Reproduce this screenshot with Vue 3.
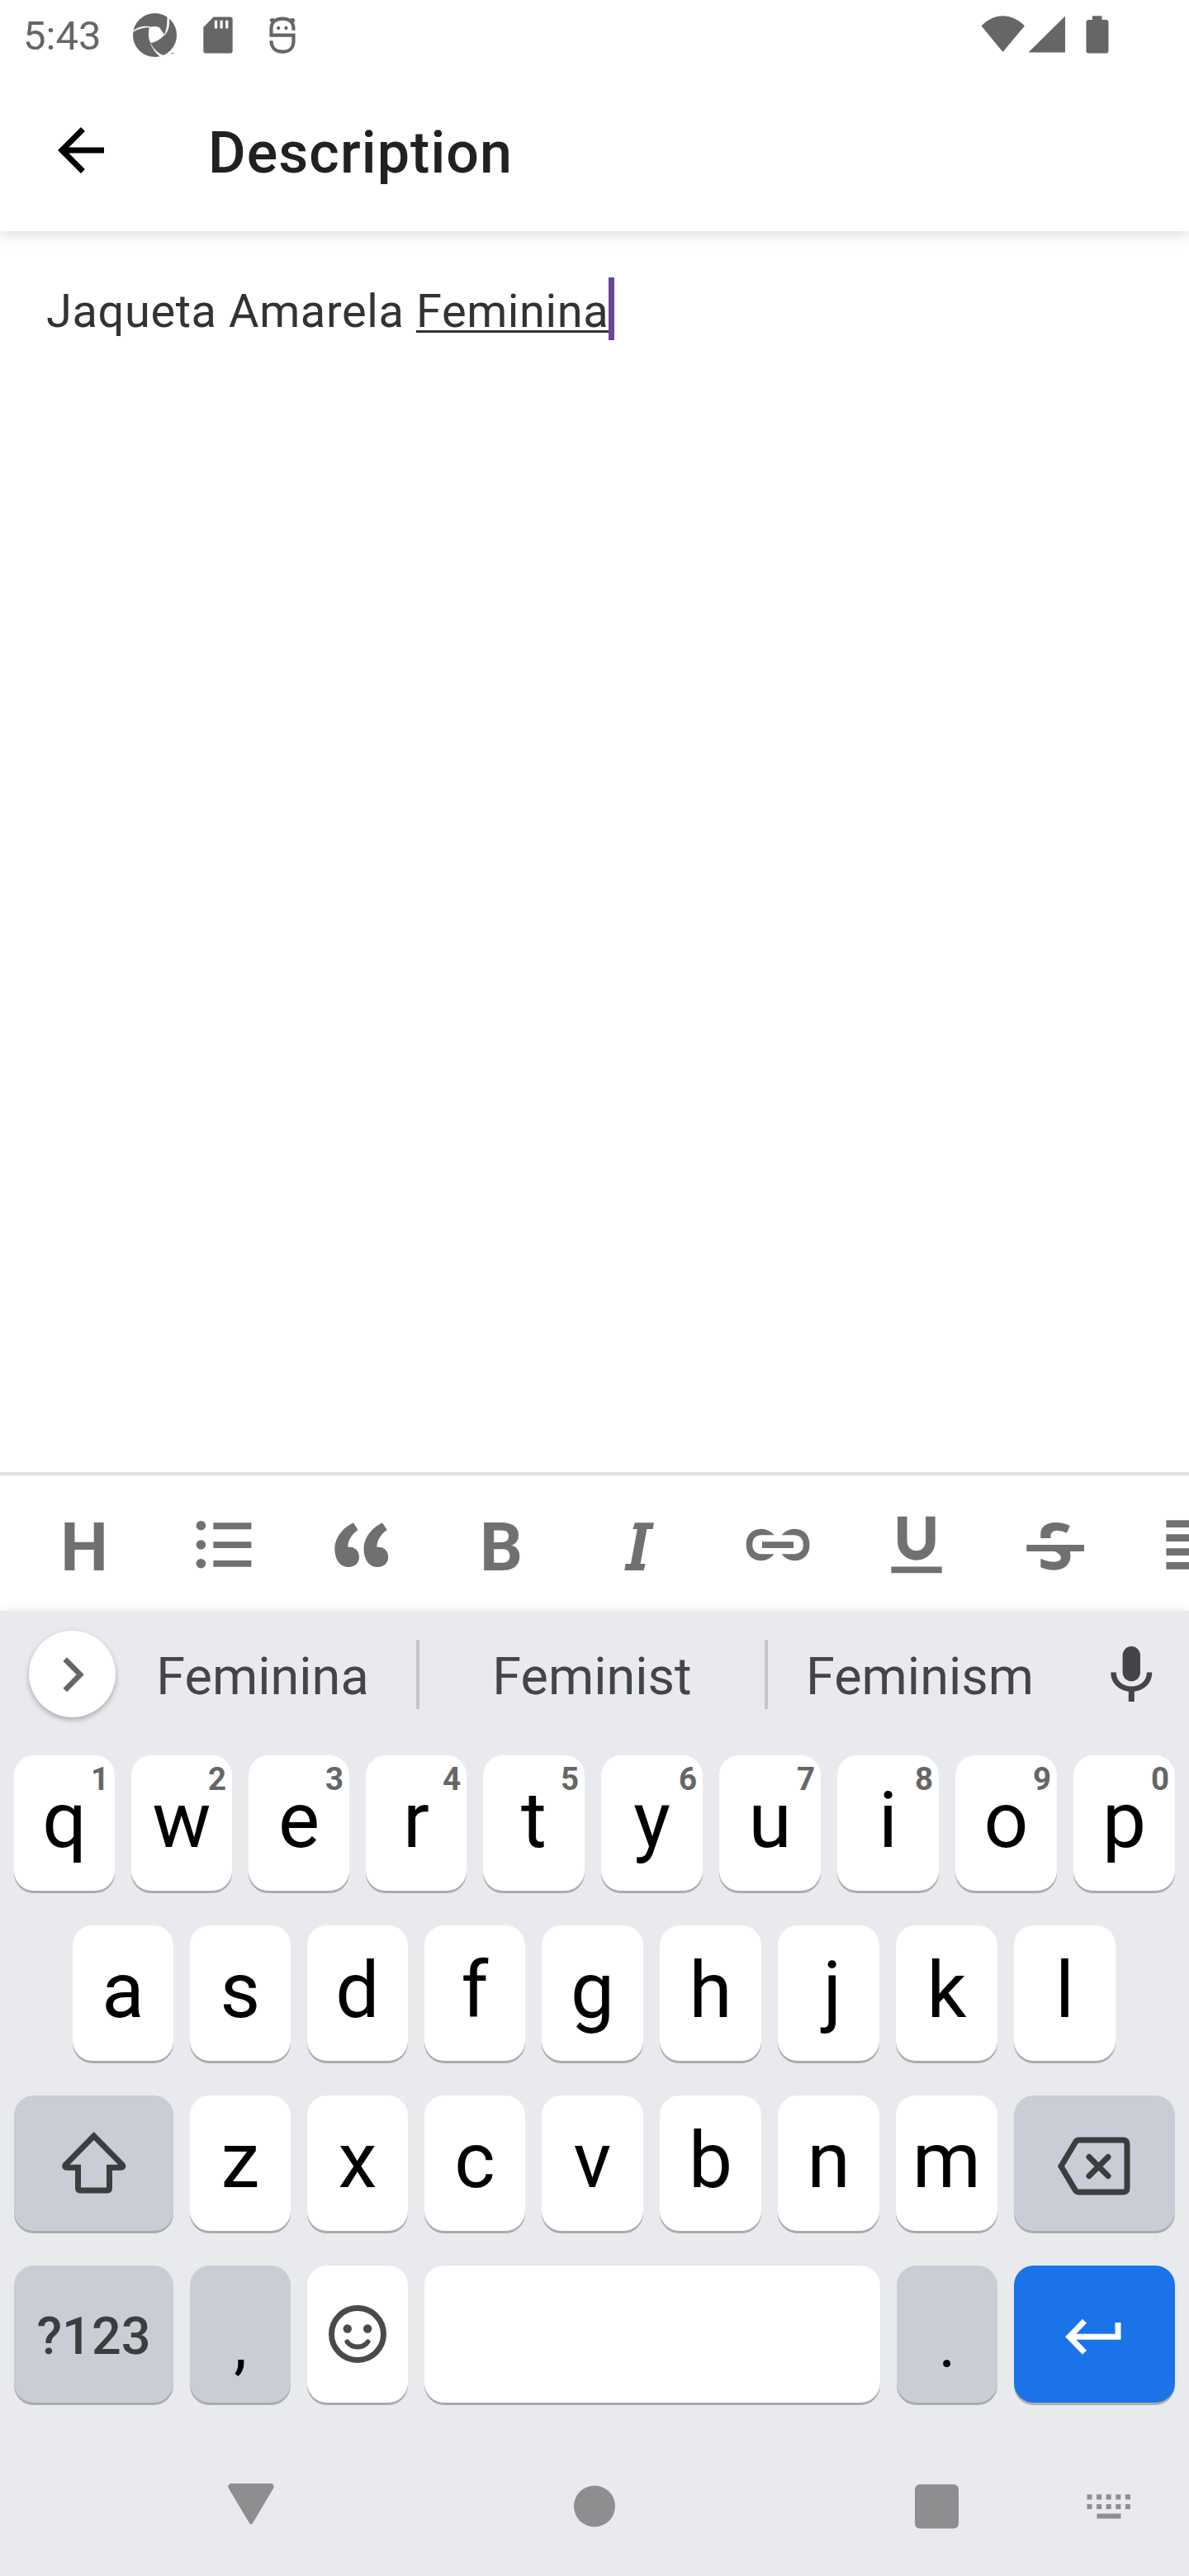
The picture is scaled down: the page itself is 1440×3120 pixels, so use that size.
<script setup>
const keyRows = [
  [..."qwertyuiop"].map((c, i) => ({ label: c, hint: String((i + 1) % 10), wide: i > 3 })),
  [..."asdfghjkl"].map((c, i) => ({ label: c, wide: i > 3 })),
]
const thirdRow = [..."zxcvbnm"].map((c, i) => ({ label: c, wide: i > 2 }))
const dotColumns = [0, 11.6, 23.2, 34.8, 46.4]
</script>

<template>
  <div class="screen">
    <header class="status">
      <span class="clock">5:43</span>
      <svg class="aperture" viewBox="33 36 159 159" width="53" height="53">
        <circle cx="112.500" cy="115.500" r="79.500" fill="#666" />
        <path d="M93 87Q116 81 129 88L148 115Q128 138 97 145Q84 118 93 87Z" fill="#fff" />
        <path d="M30 104Q62 78 96 86.500Q66 84 30 104Z" fill="#fff" stroke="#fff" stroke-width="3" />
        <path d="M159 46Q160 86 149 115Q169 90 163 50Z" fill="#fff" stroke="#fff" stroke-width="2" />
        <path d="M97 146Q110 178 134 195L144 190Q114 178 97 146Z" fill="#fff" stroke="#fff" stroke-width="1" />
        <path d="M168 181L195 172V198H140L150 189Z" fill="#fff" />
        <path d="M170 179h5v5h-3v-4zM177 179h6v5h-2v-3h-2v3h-2z" fill="#777" />
      </svg>
      <svg class="sdcard" viewBox="289 47 109 135" width="36" height="45">
        <path d="M327 48H389q8 0 8 8V173q0 8-8 8H298q-8 0-8-8V86Z" fill="#666" />
        <path d="M331 61h10v29h-10zM351 61h10v29h-10zM371 61h10v29h-10z" fill="#fff" />
      </svg>
      <svg class="mascot" viewBox="527 47 95 135" width="32" height="45">
        <g fill="none" stroke="#666" stroke-width="12.500">
          <path d="M615 97V92C615 66 598 55 575 55S534 66 534 92V115H615V136C615 162 598 175 575 175S534 162 534 135" />
          <path d="M531 56L543 68M618 56L606 68" stroke-width="10" />
          <path d="M532 66L544 54M617 66L605 54" stroke-width="7" />
        </g>
        <circle cx="560" cy="89" r="6.500" fill="#666" />
        <circle cx="588" cy="89" r="6.500" fill="#666" />
      </svg>
      <svg class="signals" viewBox="0 0 156 48" width="156" height="48">
        <g fill="#666">
          <path d="M0.500 13.300Q12 1.300 26.500 1.300T53 13.300L26.500 45Z" />
          <path d="M57.500 45.500L102 1.500V45.500Z" />
          <path d="M135 1.300h11.500v4.700h5q3 0 3 3v34.500q0 3-3 3h-21q-3 0-3-3v-34.500q0-3 3-3h4.500z" />
        </g>
      </svg>
    </header>

    <div class="appbar">
      <svg class="back" viewBox="0 0 24 24" width="84" height="84">
        <path d="M20 11H7.830l5.590-5.590L12 4l-8 8 8 8 1.410-1.410L7.830 13H20v-2z" />
      </svg>
      <h1>Description</h1>
    </div>

    <main class="editor">
      <p>Jaqueta Amarela <span class="composing">Feminina</span></p>
      <i class="caret"></i>
    </main>

    <div class="format">
      <button class="glyph">H</button>
      <button>
        <svg viewBox="0 0 84 84">
          <circle cx="15.400" cy="18.700" r="5.800" /><circle cx="15.400" cy="42" r="5.800" /><circle cx="15.400" cy="64.700" r="5.800" />
          <path d="M30.400 15.300H76.400V23.200H30.400zM30.400 38.200H76.400V46H30.400zM30.400 61H76.400V68.800H30.400z" />
        </svg>
      </button>
      <button>
        <svg viewBox="0 0 84 84">
          <path d="M32 15.500L37.500 24C29 30 25 38 25.300 45C33 44 39 49 39 57C39 64 33.500 69 26.500 69C15 69 9.400 59 9.400 47C9.400 34 19 21 32 15.500Z" />
          <path transform="translate(35.200)" d="M32 15.500L37.500 24C29 30 25 38 25.300 45C33 44 39 49 39 57C39 64 33.500 69 26.500 69C15 69 9.400 59 9.400 47C9.400 34 19 21 32 15.500Z" />
        </svg>
      </button>
      <button class="glyph bold">B</button>
      <button>
        <svg viewBox="0 0 84 84">
          <path d="M37 15.200H60L58.700 23H51.400L43.600 65H49.500L47.700 73H24.300L25.700 65H32L39.900 23H34.400Z" />
        </svg>
      </button>
      <button>
        <svg viewBox="0 0 84 84">
          <path d="M37.700 30.300H22Q11.300 31 11.300 41.800T22 53.300H37.700Q31 61.300 22 61.300C10 61.300 3.700 53 3.700 42S10 22.700 22 22.700Q31 22.700 37.700 30.300Z" />
          <path d="M46.500 30.300H62.200Q72.900 31 72.900 41.800T62.200 53.300H46.500Q53.200 61.300 62.200 61.300C74.200 61.300 80.500 53 80.500 42S74.200 22.700 62.200 22.700Q53.200 22.700 46.500 30.300Z" />
          <path d="M23 38.200H61V46H23z" />
        </svg>
      </button>
      <button>
        <svg viewBox="0 0 84 84">
          <path d="M24.800 7.700V38a17.050 17.050 0 0 0 34.100 0V7.700" fill="none" stroke="#707070" stroke-width="11.500" />
          <path d="M11.400 68.500H72.700V76.300H11.400z" />
        </svg>
      </button>
      <button>
        <svg viewBox="0 0 84 84">
          <path d="M24.300 34V28C25 19 33 15 43 15Q52 15 59.700 19L56 27.700Q49.500 24.600 43 24.800Q35 26 36.700 34Z" />
          <path d="M40.700 49.800H59.700C63 62 56 72.700 41 72.700Q31 72.700 24.300 69.300V58.700Q33 62.700 40 62.700C52 62.700 51.500 54 40.700 49.800Z" />
          <path d="M7.300 42H77V50H7.300z" />
        </svg>
      </button>
      <button>
        <svg viewBox="0 0 84 84">
          <path d="M8.400 12.300H76V21H8.400zM8.400 29.300H76V38H8.400zM8.400 46.300H76V55H8.400zM8.400 63H76V71.700H8.400z" />
        </svg>
      </button>
    </div>

    <section class="keyboard">
      <div class="suggestions">
        <span class="expand">
          <svg viewBox="-21 -21 42 42" width="42" height="42">
            <path d="M-9.300 -18.400L9.200 0.300L-9.300 19" fill="none" stroke="#666" stroke-width="6.500" />
          </svg>
        </span>
        <span class="word first">Feminina</span>
        <i class="divider"></i>
        <span class="word second">Feminist</span>
        <i class="divider"></i>
        <span class="word third">Feminism</span>
        <svg class="mic" viewBox="0 0 84 84" width="84" height="84">
          <rect x="31.600" y="8" width="21.400" height="42.300" rx="10.700" fill="#434547" />
          <path d="M20.500 39.500C20.500 51.500 30 59.700 42.300 59.700S64.100 51.500 64.100 39.500" fill="none" stroke="#434547" stroke-width="6.400" />
          <path d="M38.800 60h7v15h-7z" fill="#434547" />
        </svg>
      </div>

      <div v-for="(row, r) in keyRows" :key="r" class="row" :class="{ indent: r === 1 }">
        <div v-for="k in row" :key="k.label" class="key" :class="{ w: k.wide, hooked: k.label === 'j' }">
          {{ k.label }}<small v-if="k.hint">{{ k.hint }}</small>
        </div>
      </div>

      <div class="row">
        <div class="key mod side">
          <svg viewBox="0 0 84 84" width="84" height="84">
            <path d="M41.700 9L7.200 44Q5.500 47.200 9.500 47.200H22.500V72Q22.500 75 25.500 75H57.500q3 0 3-3V47.200H74Q78 47.200 76.200 44Z" fill="none" stroke="#3c3d3f" stroke-width="7" />
          </svg>
        </div>
        <div v-for="k in thirdRow" :key="k.label" class="key" :class="{ w: k.wide }">{{ k.label }}</div>
        <div class="key mod side right">
          <svg viewBox="0 0 96 84" width="96" height="84">
            <g fill="none" stroke="#3c3d3f" stroke-width="7">
              <path d="M7 45.700L24.500 16.500Q26 14 29 14H82Q87 14 87 19V72Q87 77 82 77H29Q26 77 24.500 75Z" />
              <path d="M41 34.500L64 57.500M64 34.500L41 57.500" stroke-linecap="round" />
            </g>
          </svg>
        </div>
      </div>

      <div class="row bottom">
        <div class="key mod side symbols">?123</div>
        <div class="key mod punct">,</div>
        <div class="key emoji">
          <svg viewBox="-42 -42 84 84" width="84" height="84">
            <circle r="31.500" fill="none" stroke="#4a4a4a" stroke-width="7" />
            <circle cx="-12.200" cy="-6.500" r="5.200" fill="#4a4a4a" />
            <circle cx="12.200" cy="-6.500" r="5.200" fill="#4a4a4a" />
            <path d="M-12.500 9.500Q-8 15.500 0 15.500T12.500 9.500" fill="none" stroke="#4a4a4a" stroke-width="6" stroke-linecap="round" />
          </svg>
        </div>
        <div class="key space"></div>
        <div class="key mod punct">.</div>
        <div class="key side right enter">
          <svg viewBox="-42 -42 84 84" width="84" height="84">
            <path d="M28 -14V3.300H-28M-12.500 -15.700L-31 3.300L-12.500 22.300" fill="none" stroke="#fff" stroke-width="7" />
          </svg>
        </div>
      </div>

      <nav class="navbar">
        <svg class="nav-back" viewBox="0 0 56 60" width="56" height="60">
          <path d="M3 2H53Q57 3.500 55 8L30 50Q28 52.500 26 50L1 8Q-1 3.500 3 2Z" />
        </svg>
        <svg class="nav-home" viewBox="0 0 50 60" width="50" height="60"><circle cx="25" cy="29.500" r="25" /></svg>
        <svg class="nav-recent" viewBox="0 0 53 60" width="53" height="60"><rect y="3" width="53" height="53.500" rx="6" /></svg>
        <svg class="nav-ime" viewBox="0 0 54 60" width="54" height="60">
          <g v-for="x in dotColumns" :key="x">
            <rect :x="x + 0.500" y="15.200" width="6" height="6.200" />
            <rect :x="x + 0.500" y="27" width="6" height="6" />
          </g>
          <rect x="12.500" y="38.500" width="29" height="6" />
        </svg>
      </nav>
    </section>
  </div>
</template>

<style>
body { margin: 0; background: #fff; }
</style>

<style scoped>
.screen {
  width: 1440px;
  height: 3120px;
  overflow: hidden;
  display: flex;
  flex-direction: column;
  background: #fff;
  font-family: Roboto, "Liberation Sans", sans-serif;
}
svg { display: block; flex: none; }
.status { height: 84px; display: flex; align-items: center; flex: none; }
.clock { width: 131px; margin-left: 28px; margin-top: 4px; font-size: 49px; line-height: 60px; color: #666; }
.aperture { margin: 1px 0 0 2px; }
.sdcard { margin-left: 32px; }
.mascot { margin-left: 44px; }
.signals { margin: 0 0 0 830px; }
.appbar {
  height: 196px;
  flex: none;
  display: flex;
  align-items: center;
  box-shadow: 0 3px 18px rgba(0, 0, 0, .16);
  clip-path: inset(0 0 -24px 0);
}
.back { margin-left: 56px; }
h1 {
  margin: 0 0 0 112px;
  padding-top: 6px;
  font-size: 70px;
  line-height: 84px;
  font-weight: 500;
  letter-spacing: 1.050px;
  color: #212121;
}
.editor { flex: 1; display: flex; align-items: flex-start; padding: 56px 56px 0; }
p { margin: 3px 0 0; font-size: 56px; line-height: 76px; letter-spacing: .580px; color: #333; white-space: pre; }
.composing {
  text-decoration: underline;
  text-decoration-thickness: 3px;
  text-underline-offset: 4px;
  text-decoration-skip-ink: none;
}
.caret { width: 7px; height: 76px; background: #6a459c; }
.format {
  height: 164px;
  flex: none;
  display: flex;
  box-sizing: content-box;
  padding-left: 18px;
  border-top: 4px solid #e2e2e2;
  overflow: hidden;
}
.format button {
  flex: none;
  width: 168px;
  height: 164px;
  padding: 4px 0 0;
  border: 0;
  background: none;
  display: flex;
  justify-content: center;
  align-items: center;
  color: #707070;
}
.format svg { width: 84px; height: 84px; fill: #707070; }
.format .glyph { padding-top: 10px; font: 700 81.600px/84px Roboto, "Liberation Sans", sans-serif; }
.format .bold { padding-left: 2px; }
.keyboard {
  height: 1169px;
  flex: none;
  background: #e8eaed;
  box-shadow: 0 0 14px rgba(0, 0, 0, .09);
}
.suggestions { height: 153px; margin-bottom: 22px; display: flex; align-items: center; }
.expand {
  width: 105px;
  height: 105px;
  flex: none;
  margin-left: 35px;
  border-radius: 50%;
  background: #fff;
  display: flex;
  align-items: center;
  justify-content: center;
  box-shadow: 0 3px 6px rgba(0, 0, 0, .28);
}
.word { padding-top: 6px; font-size: 63px; line-height: 76px; color: #434547; text-align: center; flex: none; }
.first { width: 356px; margin-right: 8px; }
.second { width: 418px; }
.third { width: 368px; }
.divider { width: 4px; height: 84px; background: #c3c5c9; flex: none; }
.mic { margin-left: 30px; }
.row { display: flex; gap: 20px; height: 164px; margin-bottom: 42px; padding-left: 17px; }
.indent { padding-left: 88px; }
.bottom { height: 166px; margin-bottom: 0; }
.key {
  position: relative;
  box-sizing: border-box;
  width: 122px;
  flex: none;
  display: flex;
  align-items: center;
  justify-content: center;
  padding-bottom: 7px;
  border-radius: 24px;
  background: #fff;
  box-shadow: 0 3px 0 #a9abad;
  font-size: 94.500px;
  color: #000;
}
.key:has(svg) { padding: 0; }
.hooked { padding-left: 9px; }
.w { width: 123px; }
.mod { background: #cbcdd6; }
.side { width: 193px; }
.right { width: 195px; }
.space { width: 552px; }
.symbols { padding: 4px 0 0; font-size: 63px; font-weight: 500; color: #3c3d3f; }
.punct { padding: 25px 0 0; font-size: 80px; }
.enter { background: #1a73e8; }
small {
  position: absolute;
  top: 9px;
  right: 7px;
  font-size: 38.500px;
  line-height: 40px;
  font-weight: 700;
  color: #666;
}
.navbar { height: 60px; padding: 96px 0 0 276px; display: flex; fill: #8d8e90; }
.nav-home, .nav-recent { margin-left: 363px; }
.nav-ime { margin-left: 155px; }
</style>
